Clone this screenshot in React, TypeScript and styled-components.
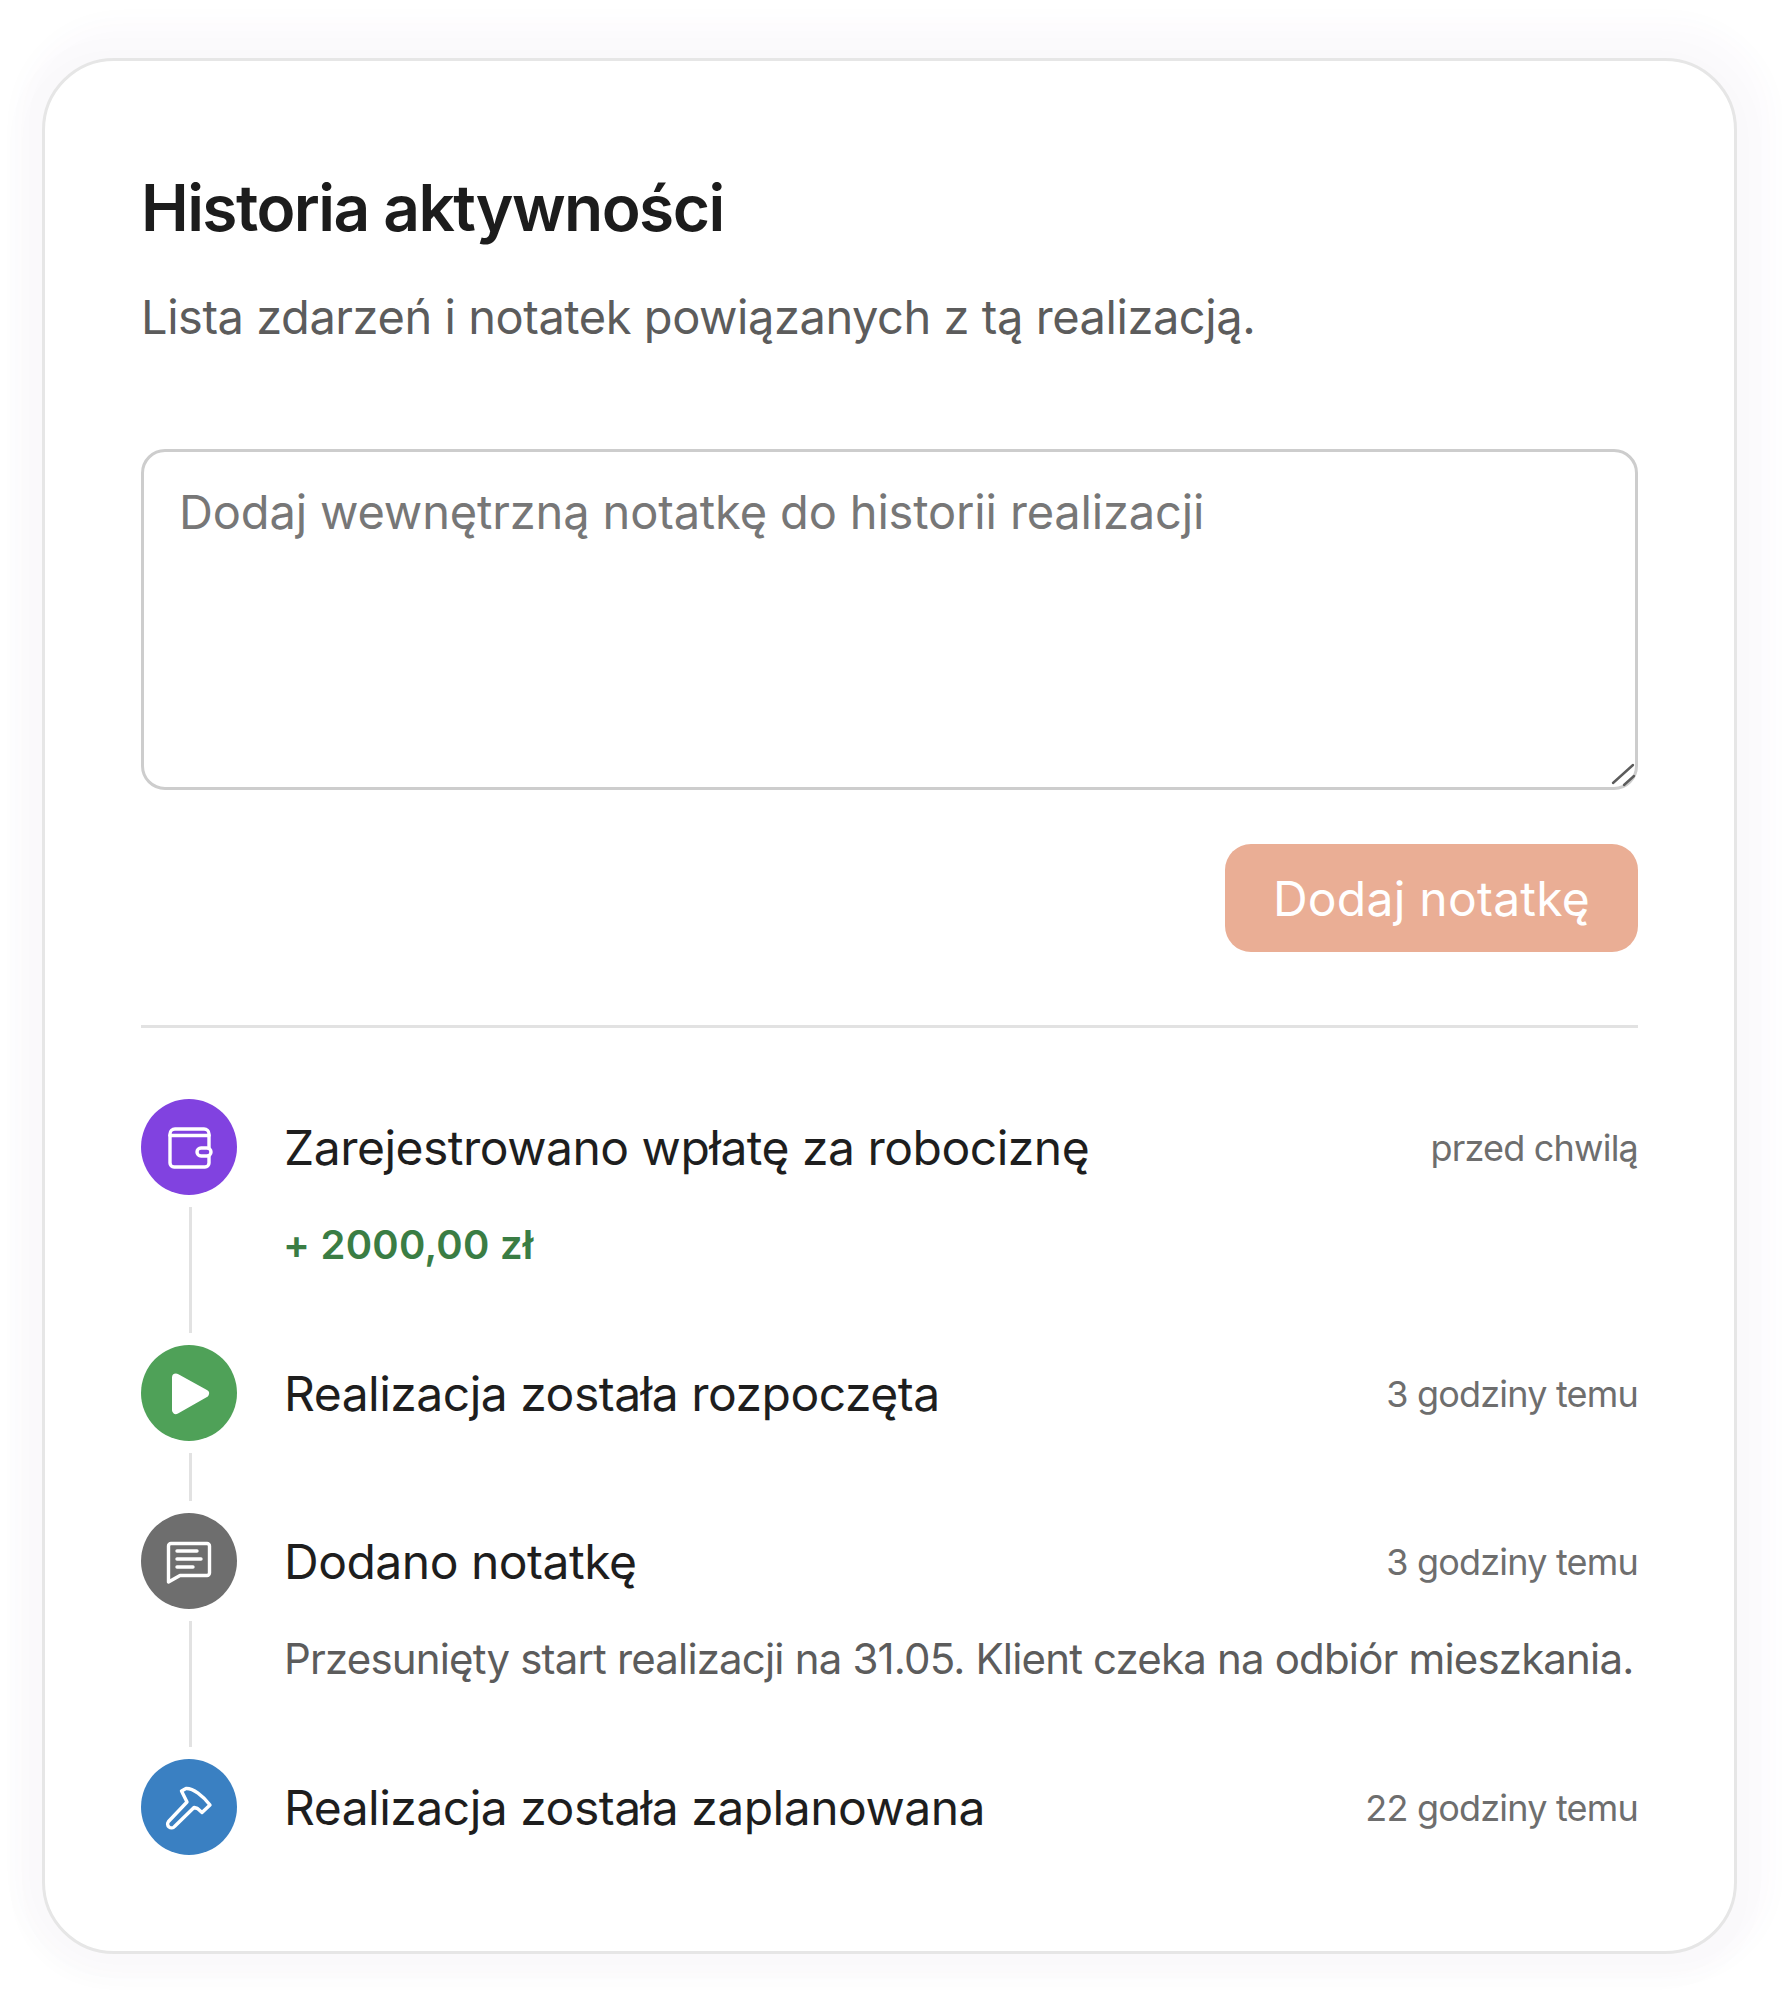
import React from "react";
import styled, { createGlobalStyle } from "styled-components";

const Global = createGlobalStyle`
  html, body { margin: 0; padding: 0; background: #fff; }
  body { font-family: Inter, "Noto Sans", sans-serif; overflow: hidden; }
`;

const Page = styled.div`
  box-sizing: border-box;
  width: 1782px;
  height: 2001px;
  padding: 58px 45px 47px 42px;
  background: #fff;
  overflow: hidden;
`;

const Card = styled.section`
  box-sizing: border-box;
  height: 1896px;
  padding: 112px 96px 95px;
  background: #fff;
  border: 3px solid #e6e6e6;
  border-radius: 72px;
  box-shadow:
    6px -8px 26px 30px rgba(90, 50, 150, 0.02),
    -4px 8px 28px 22px rgba(0, 0, 0, 0.012);
`;

const Title = styled.h2`
  margin: 0;
  font-size: 64px;
  line-height: 70px;
  font-weight: 600;
  letter-spacing: -1.55px;
  color: #1c1c1c;
`;

const Subtitle = styled.p`
  margin: 44px 0 0;
  font-size: 47px;
  line-height: 60px;
  font-weight: 400;
  letter-spacing: -0.45px;
  color: #5c5c5c;
`;

const NoteBox = styled.div`
  position: relative;
  margin-top: 102px;
  height: 341px;
`;

const NoteInput = styled.textarea`
  display: block;
  box-sizing: border-box;
  width: 100%;
  height: 100%;
  padding: 30px 35px;
  border: 3px solid #cdcdcd;
  border-radius: 24px;
  outline: none;
  resize: none;
  background: #fff;
  font-family: inherit;
  font-size: 47px;
  line-height: 60px;
  letter-spacing: -0.15px;
  color: #222;
  &::placeholder { color: #777; opacity: 1; }
`;

const Grip = styled.svg`
  position: absolute;
  right: 0;
  bottom: 0;
  width: 30px;
  height: 30px;
`;

const ActionRow = styled.div`
  display: flex;
  justify-content: flex-end;
  margin-top: 54px;
`;

const AddButton = styled.button`
  width: 413px;
  height: 108px;
  padding: 0;
  border: 0;
  border-radius: 26px;
  background: #eaae95;
  color: #fff;
  font-family: inherit;
  font-size: 48px;
  font-weight: 400;
  letter-spacing: 0.25px;
`;

const Divider = styled.hr`
  margin: 73px 0 0;
  height: 3px;
  border: 0;
  background: #e2e2e2;
`;

const Timeline = styled.ol`
  display: flex;
  flex-direction: column;
  gap: 12px;
  margin: 71px 0 0;
  padding: 0;
  list-style: none;
`;

const Item = styled.li`
  display: flex;
  gap: 47px;
`;

const Rail = styled.div`
  display: flex;
  flex-direction: column;
  align-items: center;
  flex: 0 0 96px;
`;

const Bubble = styled.div<{ $bg: string }>`
  display: flex;
  align-items: center;
  justify-content: center;
  width: 96px;
  height: 96px;
  flex: none;
  border-radius: 50%;
  background: ${(p) => p.$bg};
`;

const Connector = styled.div`
  flex: 1;
  width: 3px;
  margin: 12px 0 0 3px;
  background: #e2e2e2;
`;

const Body = styled.div<{ $last?: boolean }>`
  flex: 1;
  min-width: 0;
  padding-bottom: ${(p) => (p.$last ? 0 : 60)}px;
`;

const Head = styled.div`
  display: flex;
  align-items: center;
  justify-content: space-between;
  height: 96px;
`;

const EventName = styled.span`
  font-size: 48px;
  font-weight: 400;
  letter-spacing: -0.5px;
  color: #1e1e1e;
`;

const When = styled.span`
  padding-top: 2px;
  font-size: 36px;
  font-weight: 400;
  letter-spacing: -0.8px;
  color: #6e6e6e;
`;

const Amount = styled.div`
  margin: 23px 0 1px -1px;
  font-size: 40px;
  line-height: 54px;
  font-weight: 600;
  letter-spacing: 0.25px;
  color: #3a7d44;
`;

const Note = styled.div`
  margin: 23px 0 1px;
  font-size: 42px;
  line-height: 54px;
  font-weight: 400;
  letter-spacing: -0.83px;
  color: #5c5c5c;
  white-space: nowrap;
`;

const Glyph = styled.svg<{ $solid?: boolean }>`
  width: 48px;
  height: 48px;
  fill: ${(p) => (p.$solid ? "#fff" : "none")};
  stroke: #fff;
  stroke-width: ${(p) => (p.$solid ? 8 : 3.4)};
  stroke-linecap: round;
  stroke-linejoin: round;
`;

const WalletIcon = () => (
  <Glyph viewBox="0 0 48 48">
    <path d="M44 25v-14a5 5 0 0 0-5-5H10a5 5 0 0 0-5 5v29a4 4 0 0 0 4 4h31a4 4 0 0 0 4-4v-7" />
    <path d="M5 12.5h39" />
    <rect x="32" y="25" width="14" height="8" rx="4" />
  </Glyph>
);

const PlayIcon = () => (
  <Glyph viewBox="0 0 48 48" $solid>
    <path d="M11 8.5L40 24.5L11 41Z" />
  </Glyph>
);

const ChatIcon = () => (
  <Glyph viewBox="0 0 48 48">
    <path d="M6 6.5h36a2.5 2.5 0 0 1 2.5 2.5v27a2.5 2.5 0 0 1-2.5 2.5H15L3.5 45V9A2.5 2.5 0 0 1 6 6.5z" />
    <path d="M12 14h20M12 22h24M12 30h16" />
  </Glyph>
);

const HammerIcon = () => (
  <Glyph viewBox="0 0 48 48">
    <path d="M16.5 8L21 5.5C28 5 38 13 45 22L37 29.5L32.5 25.5L29 24.5L9.5 43.5a3.6 3.6 0 0 1-6-5L22 19Z" />
  </Glyph>
);

type Entry = {
  name: string;
  when: string;
  bg: string;
  icon: React.ReactNode;
  amount?: string;
  note?: string;
};

const entries: Entry[] = [
  { name: "Zarejestrowano wpłatę za robociznę", when: "przed chwilą", bg: "#8142e0", icon: <WalletIcon />, amount: "+ 2000,00 zł" },
  { name: "Realizacja została rozpoczęta", when: "3 godziny temu", bg: "#4fa158", icon: <PlayIcon /> },
  { name: "Dodano notatkę", when: "3 godziny temu", bg: "#6e6e6e", icon: <ChatIcon />, note: "Przesunięty start realizacji na 31.05. Klient czeka na odbiór mieszkania." },
  { name: "Realizacja została zaplanowana", when: "22 godziny temu", bg: "#3a80c2", icon: <HammerIcon /> },
];

export default function App() {
  return (
    <Page>
      <Global />
      <Card>
        <Title>Historia aktywności</Title>
        <Subtitle>Lista zdarzeń i notatek powiązanych z tą realizacją.</Subtitle>
        <NoteBox>
          <NoteInput placeholder="Dodaj wewnętrzną notatkę do historii realizacji" />
          <Grip viewBox="0 0 30 30" fill="none" stroke="#5c5c5c" strokeWidth="2.4" strokeLinecap="round">
            <path d="M5 23L25 5M16 25L26 16" />
          </Grip>
        </NoteBox>
        <ActionRow>
          <AddButton>Dodaj notatkę</AddButton>
        </ActionRow>
        <Divider />
        <Timeline>
          {entries.map((e, i) => {
            const last = i === entries.length - 1;
            return (
              <Item key={e.name}>
                <Rail>
                  <Bubble $bg={e.bg}>{e.icon}</Bubble>
                  {!last && <Connector />}
                </Rail>
                <Body $last={last}>
                  <Head>
                    <EventName>{e.name}</EventName>
                    <When>{e.when}</When>
                  </Head>
                  {e.amount && <Amount>{e.amount}</Amount>}
                  {e.note && <Note>{e.note}</Note>}
                </Body>
              </Item>
            );
          })}
        </Timeline>
      </Card>
    </Page>
  );
}
